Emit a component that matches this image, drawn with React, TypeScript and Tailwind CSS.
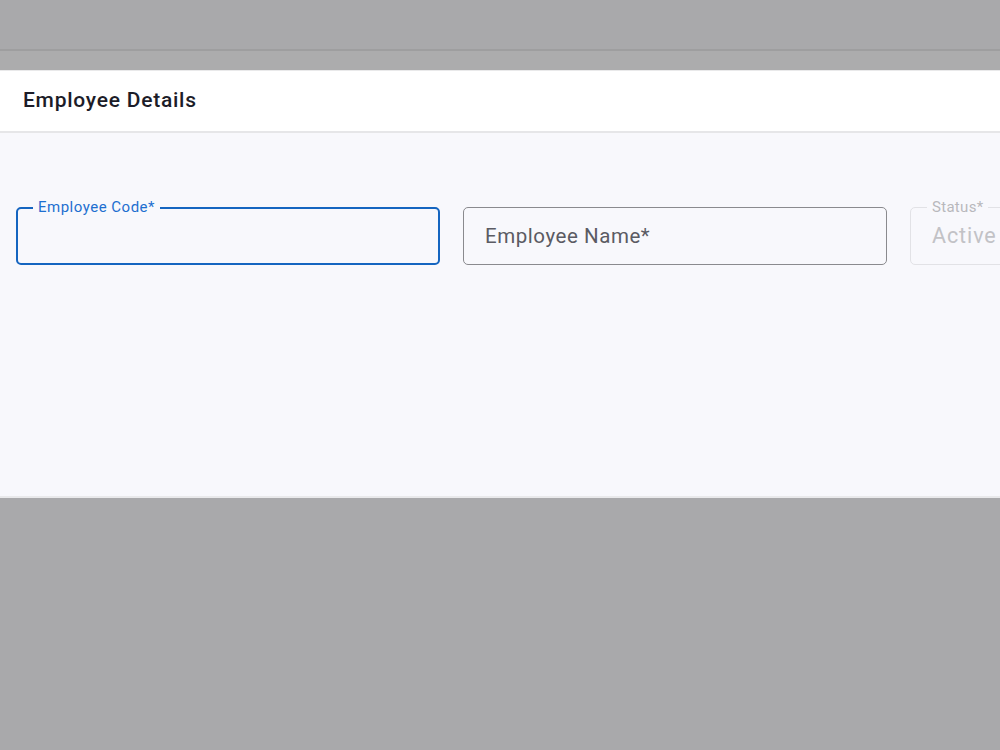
import React from 'react';

const font = { fontFamily: 'Roboto, "Noto Sans", sans-serif' };

export default function App() {
  return (
    <div className="w-full h-[750px] bg-[#a9a9ab] flex flex-col overflow-hidden" style={font}>
      {/* Backdrop strip */}
      <div className="h-[49px] shrink-0" />
      <div className="h-[2px] shrink-0 bg-[#9e9e9f]" />
      <div className="h-[19px] shrink-0 bg-[#acacad]" />

      {/* Dialog */}
      <div className="shrink-0 border-t border-[#e9e9ea] bg-white">
        <div className="h-[62px] px-[23px] flex items-center border-b-2 border-[#e6e6e8]">
          <h2 className="text-[21px] font-medium text-[#1c1c28] tracking-[0.75px]">Employee Details</h2>
        </div>

        <div className="h-[363px] bg-[#f8f8fc] pt-[74px] px-[16px] overflow-hidden">
          <div className="flex gap-[24px] w-[1400px]">
            {/* Employee Code (focused) */}
            <div className="relative w-[424px] h-[58px] shrink-0 rounded-[5px] border-2 border-[#1565c0]">
              <span className="absolute -top-[11px] left-[15px] px-[5px] bg-[#f8f8fc] text-[15px] leading-[18px] text-[#1e6fd0] tracking-[0.5px]">
                Employee Code*
              </span>
            </div>

            {/* Employee Name */}
            <div className="w-[424px] h-[58px] shrink-0 -ml-[1px] rounded-[5px] border border-[#8a8a8e] flex items-center px-[21px]">
              <span className="text-[20.5px] text-[#5b5b63] tracking-[0.55px]">Employee Name*</span>
            </div>

            {/* Status (disabled) */}
            <div className="relative w-[424px] h-[58px] shrink-0 -ml-[1px] rounded-[5px] border border-[#e2e2e6] flex items-center px-[21px]">
              <span className="absolute -top-[10px] left-[16px] px-[5px] bg-[#f8f8fc] text-[15px] leading-[18px] text-[#b8b8bc] tracking-[0.3px]">
                Status*
              </span>
              <span className="text-[21.5px] text-[#c2c2c6] pt-[1px] tracking-[0.9px]">Active</span>
            </div>
          </div>
        </div>
        <div className="h-[2px] bg-[#e9e9eb]" />
      </div>
    </div>
  );
}
